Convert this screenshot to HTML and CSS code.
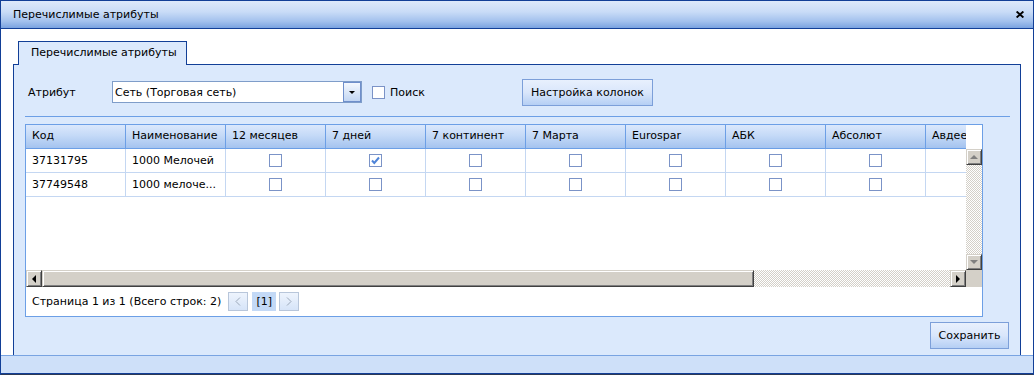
FILE: index.html
```html
<!DOCTYPE html>
<html lang="ru">
<head>
<meta charset="utf-8">
<title>Перечислимые атрибуты</title>
<link rel="stylesheet" href="styles.css">
</head>
<body>
<div class="window">
  <div class="titlebar">
    <span class="title">Перечислимые атрибуты</span>
    <span class="close"><svg width="8" height="7" viewBox="0 0 8 7"><path d="M0.6 0.5 L7.4 6.5 M7.4 0.5 L0.6 6.5" stroke="#000" stroke-width="1.9" fill="none"/></svg></span>
  </div>
  <div class="wbody">
    <div class="tabstrip"><div class="tab">Перечислимые атрибуты</div></div>
    <div class="panel">
      <div class="toolbar">
        <span class="lbl">Атрибут</span>
        <div class="combo"><span class="combo-text">Сеть (Торговая сеть)</span><span class="trigger"><i class="tri-down-s"></i></span></div>
        <span class="chk chk-search"></span><span class="cb-label">Поиск</span>
        <button class="btn cols-btn">Настройка колонок</button>
      </div>
      <div class="sep"></div>
      <div class="grid">
        <div class="grid-main">
          <div class="ghead">
            <div class="hcell">Код</div>
            <div class="hcell">Наименование</div>
            <div class="hcell">12 месяцев</div>
            <div class="hcell">7 дней</div>
            <div class="hcell">7 континент</div>
            <div class="hcell">7 Марта</div>
            <div class="hcell">Eurospar</div>
            <div class="hcell">АБК</div>
            <div class="hcell">Абсолют</div>
            <div class="hcell">Авдее</div>
          </div>
          <div class="gcorner-top"></div>
          <div class="gbody">
            <div class="grow">
              <div class="gcell">37131795</div>
              <div class="gcell">1000 Мелочей</div>
              <div class="gcell c"><span class="chk"></span></div>
              <div class="gcell c"><span class="chk on"><svg width="11" height="11" viewBox="0 0 11 11"><path d="M2 5.5 L4.3 8 L9 2.5" stroke="#4f84d8" stroke-width="2" fill="none"/></svg></span></div>
              <div class="gcell c"><span class="chk"></span></div>
              <div class="gcell c"><span class="chk"></span></div>
              <div class="gcell c"><span class="chk"></span></div>
              <div class="gcell c"><span class="chk"></span></div>
              <div class="gcell c"><span class="chk"></span></div>
              <div class="gcell c"></div>
            </div>
            <div class="grow">
              <div class="gcell">37749548</div>
              <div class="gcell">1000 мелоче...</div>
              <div class="gcell c"><span class="chk"></span></div>
              <div class="gcell c"><span class="chk"></span></div>
              <div class="gcell c"><span class="chk"></span></div>
              <div class="gcell c"><span class="chk"></span></div>
              <div class="gcell c"><span class="chk"></span></div>
              <div class="gcell c"><span class="chk"></span></div>
              <div class="gcell c"><span class="chk"></span></div>
              <div class="gcell c"></div>
            </div>
          </div>
          <div class="vscroll">
            <span class="sbtn"><i class="tri-up"></i></span>
            <span class="track"></span>
            <span class="sbtn"><i class="tri-down"></i></span>
          </div>
          <div class="hscroll">
            <span class="sbtn"><i class="tri-left"></i></span>
            <span class="hthumb"></span>
            <span class="track"></span>
            <span class="sbtn"><i class="tri-right"></i></span>
          </div>
          <div class="gcorner"></div>
        </div>
        <div class="pager">
          <span class="ptext">Страница 1 из 1 (Всего строк: 2)</span>
          <span class="pbtn prev"><svg width="6" height="9" viewBox="0 0 6 9"><path d="M5 0.5 L1 4.5 L5 8.5" stroke="#9aa7b8" stroke-width="1" fill="none"/></svg></span>
          <span class="pcur">[1]</span>
          <span class="pbtn next"><svg width="6" height="9" viewBox="0 0 6 9"><path d="M1 0.5 L5 4.5 L1 8.5" stroke="#9aa7b8" stroke-width="1" fill="none"/></svg></span>
        </div>
      </div>
      <div class="actions"><button class="btn save">Сохранить</button></div>
    </div>
  </div>
  <div class="footer"></div>
  <div class="under"></div>
</div>
</body>
</html>
```
FILE: styles.css
```css
* { box-sizing: border-box; }
html, body { margin: 0; padding: 0; }
body {
  width: 1034px;
  height: 375px;
  overflow: hidden;
  background: #fff;
  font-family: "DejaVu Sans", Verdana, sans-serif;
  font-size: 11px;
  color: #000;
}
.window {
  width: 1034px;
  height: 375px;
  border: 1px solid #123f97;
  border-bottom: 0;
  display: flex;
  flex-direction: column;
}
.titlebar {
  flex: none;
  height: 28px;
  border-bottom: 1px solid #123f97;
  background: linear-gradient(#dde9fb 0%, #c9dcf7 40%, #a3c1ed 75%, #7aa3e0 100%);
  display: flex;
  align-items: center;
  padding-left: 12px;
  padding-right: 9px;
}
.title { flex: 1; }
.close { display: flex; width: 8px; height: 7px; }

.wbody {
  flex: none;
  height: 326px;
  padding: 12px 12px 0 12px;
  display: flex;
  flex-direction: column;
  overflow: hidden;
}
.tabstrip {
  flex: none;
  height: 23px;
  padding-left: 5px;
  display: flex;
  position: relative;
  z-index: 1;
}
.tab {
  width: 169px;
  height: 24px;
  border: 1px solid #123f97;
  border-bottom: 0;
  background: #dbe9fc;
  padding-left: 12px;
  line-height: 22px;
  white-space: nowrap;
}
.panel {
  flex: 1;
  border: 1px solid #123f97;
  border-bottom: 0;
  background: #dbe9fc;
  overflow: hidden;
}
.toolbar {
  margin-top: 14px;
  height: 26px;
  padding-left: 14px;
  display: flex;
  align-items: center;
}
.lbl { width: 84px; flex: none; }
.combo {
  width: 250px;
  height: 22px;
  flex: none;
  border: 1px solid #7f9dc9;
  background: #fff;
  display: flex;
  align-items: center;
}
.combo-text { flex: 1; padding-left: 2px; white-space: nowrap; }
.trigger {
  width: 18px;
  height: 20px;
  border: 1px solid #6f8fcb;
  background: linear-gradient(#f4f8fe, #dbe7f8 50%, #c2d6f3);
  display: flex;
  align-items: center;
  justify-content: center;
}
.tri-down-s {
  width: 0; height: 0;
  border-left: 3px solid transparent;
  border-right: 3px solid transparent;
  border-top: 3px solid #000;
}
.chk {
  display: inline-flex;
  align-items: center;
  justify-content: center;
  width: 13px;
  height: 13px;
  border: 1px solid #7b93c7;
  background: #fff;
  flex: none;
}
.chk-search { margin-left: 10px; }
.cb-label { width: 132px; flex: none; margin-left: 5px; }
.btn {
  font: inherit;
  color: #000;
  padding: 0;
  border: 1px solid #7c9fd9;
  background: linear-gradient(#e8f0fd 0%, #d9e6fb 50%, #b5cff4 100%);
  flex: none;
}
.cols-btn { width: 131px; height: 27px; }
.sep {
  margin: 11px 10px 0 11px;
  height: 1px;
  background: #6c9fe6;
}
.grid {
  margin: 7px 0 0 11px;
  width: 958px;
  height: 193px;
  border: 1px solid #6c9fe6;
  background: #fff;
}
.grid-main {
  display: grid;
  grid-template-columns: 940px 16px;
  grid-template-rows: 24px 121px 17px;
}
.ghead {
  display: flex;
  overflow: hidden;
  background: linear-gradient(#dbe8fc 0%, #c5daf7 45%, #a4c3ef 100%);
  border-bottom: 1px solid #6c9fe6;
}
.hcell {
  width: 100px;
  flex: none;
  border-right: 1px solid #6c9fe6;
  padding-left: 6px;
  line-height: 22px;
  white-space: nowrap;
  overflow: hidden;
}
.gcorner-top { background: #fff; }
.gbody { overflow: hidden; background: #fff; }
.grow {
  display: flex;
  height: 24px;
  width: 1000px;
  border-bottom: 1px solid #c4d7f2;
}
.gcell {
  width: 100px;
  flex: none;
  border-right: 1px solid #c4d7f2;
  padding-left: 6px;
  line-height: 23px;
  white-space: nowrap;
  overflow: hidden;
}
.gcell.c {
  padding-left: 0;
  display: flex;
  align-items: center;
  justify-content: center;
}
.vscroll { display: flex; flex-direction: column; }
.hscroll { display: flex; }
.sbtn {
  flex: none;
  width: 16px;
  height: 16px;
  background: #d4d0c8;
  border: 1px solid;
  border-color: #d4d0c8 #404040 #404040 #d4d0c8;
  box-shadow: inset 1px 1px #fff, inset -1px -1px #808080;
  display: flex;
  align-items: center;
  justify-content: center;
}
.hscroll .sbtn { height: 17px; }
.track {
  flex: 1;
  background: repeating-conic-gradient(#d4d0c8 0 25%, #fff 0 50%) 0 0 / 2px 2px;
}
.hthumb {
  flex: none;
  width: 712px;
  height: 17px;
  background: #d4d0c8;
  border: 1px solid;
  border-color: #d4d0c8 #404040 #404040 #d4d0c8;
  box-shadow: inset 1px 1px #fff, inset -1px -1px #808080;
}
.gcorner { background: #d4d0c8; }
.tri-up, .tri-down {
  width: 0; height: 0;
  border-left: 4px solid transparent;
  border-right: 4px solid transparent;
}
.tri-up { border-bottom: 4px solid #808080; }
.tri-down { border-top: 4px solid #808080; }
.tri-left, .tri-right {
  width: 0; height: 0;
  border-top: 4px solid transparent;
  border-bottom: 4px solid transparent;
}
.tri-left { border-right: 4px solid #000; }
.tri-right { border-left: 4px solid #000; }

.pager {
  height: 29px;
  display: flex;
  align-items: center;
  padding-left: 6px;
}
.ptext { white-space: nowrap; }
.pbtn {
  width: 20px;
  height: 19px;
  border: 1px solid #b8c6da;
  background: linear-gradient(#eef4fd, #d6e4f8);
  display: flex;
  align-items: center;
  justify-content: center;
}
.prev { margin-left: 7px; }
.pcur {
  width: 24px;
  height: 19px;
  margin-left: 4px;
  background: #c3d9f6;
  text-align: center;
  line-height: 19px;
}
.next { margin-left: 3px; }
.actions {
  margin-top: 5px;
  display: flex;
  justify-content: flex-end;
  padding-right: 11px;
}
.save { width: 79px; height: 27px; }
.footer {
  flex: none;
  height: 19px;
  border-top: 1px solid #79a4e2;
  border-bottom: 1px solid #123f97;
  background: #cee0f9;
}
.under {
  flex: none;
  height: 1px;
  background: #2d3a55;
}
```
